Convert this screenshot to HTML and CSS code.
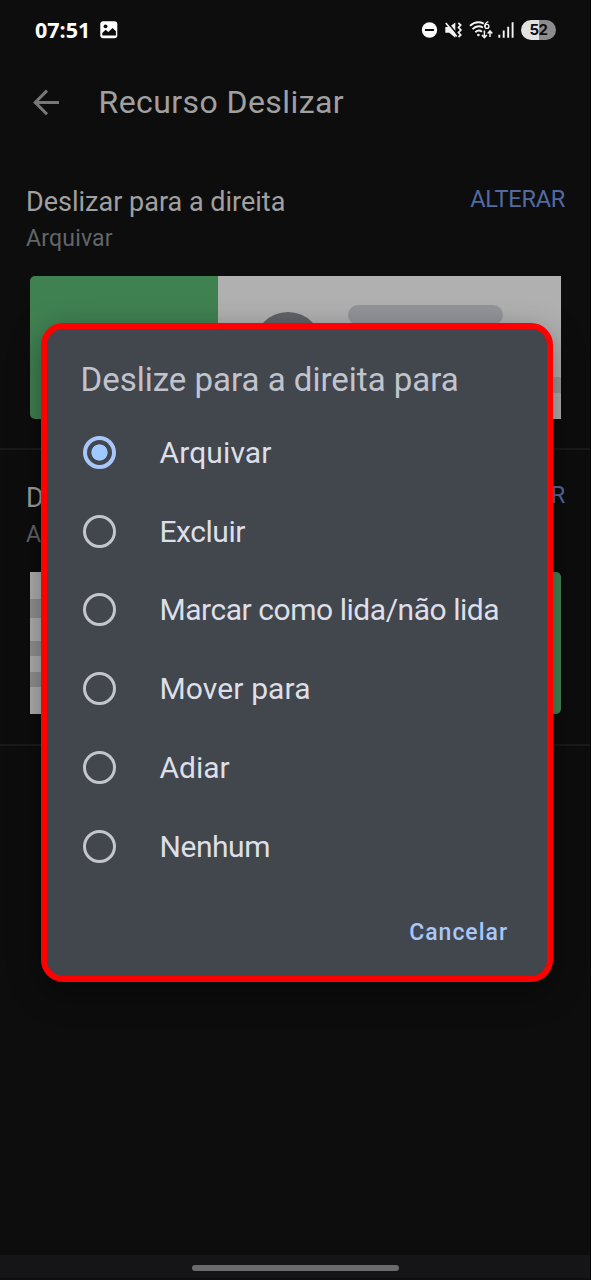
FILE: index.html
```html
<!DOCTYPE html>
<html lang="pt-BR">
<head>
<meta charset="utf-8">
<title>Recurso Deslizar</title>
<link rel="stylesheet" href="styles.css">
</head>
<body>
<div class="screen">
  <header class="status">
    <span class="clock">07:51</span>
    <svg class="photo" width="18" height="18" viewBox="0 0 18 18"><rect x=".3" y=".3" width="17" height="17" rx="3" fill="#fff"/><circle cx="5.5" cy="5.3" r="1.9" fill="#0d0d0d"/><path d="M2.3 14.5v-2.6l3.3-3.2 2.7 2.4 4.3-4.2 3.3 3.3v4.3z" fill="#0d0d0d"/></svg>
    <svg class="indicators" width="95" height="22" viewBox="421 19 95 22" fill="none" stroke="#f4f4f4">
      <circle cx="429.5" cy="30" r="7.7" fill="#fafafa" stroke="none"/><path d="M425 30h9" stroke="#0d0d0d" stroke-width="2"/>
      <path d="M445.300 27h4l6-4.500v15.200l-6-4.900h-4z" fill="#f4f4f4" stroke="none"/><path d="M447.500 22.500l11.500 14" stroke="#0d0d0d" stroke-width="1.600"/><path d="M445.800 23l11 13.500" stroke-width="1.700"/><path d="M458.300 23l2.400 2-2.200 2.500 2.400 2.500-2.400 2.500 2.200 2.500-2.200 2" stroke-width="1.700"/>
      <path d="M470 25.800c4-3.700 9.200-4.300 13.800-2.200M472.500 29.200c3-3 7.200-3.400 10.500-1.700M475.300 32.200c2.100-1.900 4.600-2 6.700-.5" stroke-width="1.900"/><circle cx="478.400" cy="35" r="1.300" fill="#f4f4f4" stroke="none"/>
      <path d="M488.300 21.700c-2.700 1.200-3.700 3.200-3.400 5.300" stroke-width="1.300"/><circle cx="486.900" cy="26.400" r="2" stroke-width="1.300"/>
      <path d="M484.400 30.500v7M481.900 35l2.500 2.600 2.500-2.600M490 37v-6M487.700 33.400l2.300-2.500 2.300 2.500" stroke-width="1.500"/>
      <path d="M499.300 34.800v3M503.700 30.500v7.300M508.200 26.800v11M512.600 22.300v15.500" stroke-width="1.900"/>
    </svg>
    <span class="battery">52</span>
  </header>

  <div class="appbar">
    <svg width="28" height="28" viewBox="0 0 28 28" fill="none" stroke="#777" stroke-width="3"><path d="M27 14.400H3.500M15 2.600L3.200 14.400 15 26.200"/></svg>
    <h1 class="appbar-title">Recurso Deslizar</h1>
  </div>

  <main>
    <section class="setting">
      <div class="setting-head"><h2>Deslizar para a direita</h2><span class="change">ALTERAR</span></div>
      <p class="value">Arquivar</p>
      <svg class="preview" width="531" height="143" viewBox="0 0 531 143">
        <path d="M188 0h343v143H188z" fill="#b0b0b0"/><path d="M188 0v143H5a5 5 0 0 1-5-5V5a5 5 0 0 1 5-5z" fill="#408151"/>
        <circle cx="258" cy="70" r="34" fill="#5f6367"/><rect x="318" y="29" width="155" height="20" rx="10" fill="#939499"/><path d="M318 101h213v16H318z" fill="#9a9b9d"/>
      </svg>
    </section>
    <section class="setting">
      <div class="setting-head"><h2>Deslizar para a esquerda</h2><span class="change">ALTERAR</span></div>
      <p class="value">Arquivar</p>
      <svg class="preview" width="531" height="142" viewBox="0 0 531 142">
        <path d="M0 0h343v142H0z" fill="#b0b0b0"/><path d="M343 0h183a5 5 0 0 1 5 5v132a5 5 0 0 1-5 5H343z" fill="#438553"/>
        <path d="M0 27h155v19H0zM0 69h213v15H0zM0 100h213v15H0z" fill="#929292"/>
      </svg>
    </section>
  </main>

  <footer class="navbar"><div class="handle"></div></footer>

  <div class="dialog" role="dialog">
    <h2 class="dialog-title">Deslize para a direita para</h2>
    <div class="options">
      <div class="option"><i class="radio on"></i><span class="wide">Arquivar</span></div>
      <div class="option"><i class="radio"></i><span class="tight">Excluir</span></div>
      <div class="option"><i class="radio"></i><span class="tight">Marcar como lida/não lida</span></div>
      <div class="option"><i class="radio"></i><span class="wide">Mover para</span></div>
      <div class="option"><i class="radio"></i><span>Adiar</span></div>
      <div class="option"><i class="radio"></i><span class="tight">Nenhum</span></div>
    </div>
    <div class="actions"><span class="cancel">Cancelar</span></div>
  </div>
</div>
</body>
</html>
```
FILE: styles.css
```css
* { box-sizing: border-box; }
body, h1, h2, p { margin: 0; font-weight: 400; }
body { background: #0d0d0d; font-family: Roboto, sans-serif; }
.screen { position: relative; width: 591px; height: 1280px; overflow: hidden; display: flex; flex-direction: column; background: #0d0d0d; border-right: 1px solid #030303; }
.status { height: 60px; display: flex; align-items: center; padding: 0 34px 0 35px; color: #fff; }
.clock { width: 65px; font: 700 21.5px/60px "Open Sans", sans-serif; white-space: nowrap; }
.photo { flex: none; }
.indicators { margin-left: 303px; flex: none; }
.battery { margin-left: 5px; width: 35px; flex: none; height: 20px; border-radius: 10px; background: linear-gradient(90deg, #e2e2e2 52%, #8c8c8c 52%); color: #0d0d0d; font: 700 15px/20px Inter, sans-serif; letter-spacing: -.4px; text-align: center; }
.appbar { height: 84px; padding-left: 32px; display: flex; align-items: center; }
.appbar-title { margin-left: 38.500px; font-size: 32px; line-height: 86px; color: #a0a0a0; letter-spacing: .42px; }
.setting { height: 306px; padding-top: 39px; border-bottom: 2px solid #1a1a1a; }
.setting + .setting { height: 296px; padding-top: 29px; }
.setting-head { display: flex; justify-content: space-between; padding: 0 25px 0 26px; height: 38px; }
.setting-head h2 { font-size: 27px; line-height: 38px; color: #a0a0a0; }
.change { font-size: 23.500px; line-height: 32px; color: #536ba2; letter-spacing: -.25px; }
.value { padding-left: 26px; font-size: 23px; line-height: 36px; height: 55px; color: #62666a; letter-spacing: .2px; }
.preview { display: block; margin-left: 30px; }
.navbar { margin-top: auto; height: 25px; background: #151518; border-bottom: 2px solid #0f0f11; padding-top: 10px; }
.handle { width: 207px; height: 6px; margin-left: 192px; border-radius: 3px; background: #6b6b6b; }
.dialog { position: absolute; left: 41px; top: 323px; width: 512px; height: 659px; border: 6px solid #f00; border-radius: 22px; background: #42464d; box-shadow: 0 10px 32px rgba(0,0,0,.38); padding-top: 26px; }
.dialog-title { padding-left: 33.500px; font-size: 33px; line-height: 50px; color: #c1c4cd; white-space: nowrap; }
.options { padding: 8px 0 0 36px; display: grid; grid-auto-rows: 78.800px; }
.option { display: flex; align-items: center; gap: 43.500px; font-size: 30px; color: #dddfe8; white-space: nowrap; }
.option .tight { letter-spacing: -.46px; }
.option .wide { letter-spacing: .12px; }
.radio { width: 33px; height: 33px; border-radius: 50%; border: 3px solid #c3c6cf; flex: none; }
.radio.on { border-width: 4px; border-color: #a8c7fa; background: radial-gradient(circle, #a0c9ff 7.800px, transparent 8.400px); }
.actions { display: flex; justify-content: flex-end; padding: 25px 39px 0 0; }
.cancel { font-size: 23px; line-height: 43px; font-weight: 500; color: #a8c7fa; letter-spacing: .98px; }
```
